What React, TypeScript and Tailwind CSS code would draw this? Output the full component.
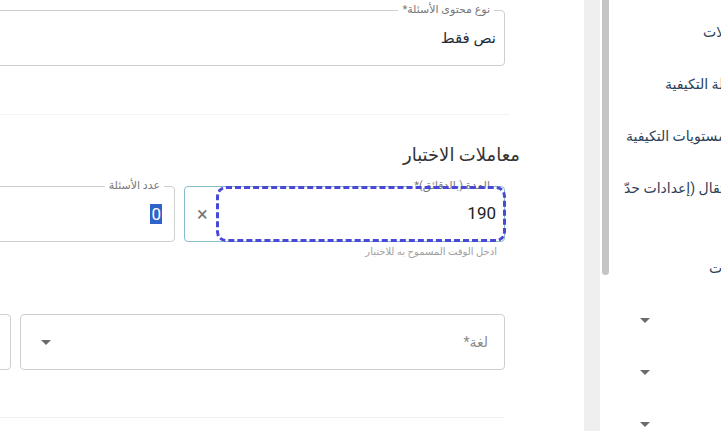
import React from 'react';

const FONT = { fontFamily: "Roboto, 'DejaVu Sans', sans-serif" };

function Caret() {
  return (
    <span className="inline-block h-0 w-0 border-x-[5px] border-t-[5px] border-x-transparent border-t-[#6b6b6b]" />
  );
}

interface OutlinedProps {
  label: string;
  className?: string;
  children?: React.ReactNode;
  borderClass?: string;
}

function Outlined({ label, className = '', children, borderClass = 'border-[#cfcfcf]' }: OutlinedProps) {
  return (
    <div className={`relative h-[56px] rounded-[4px] border ${borderClass} ${className}`}>
      <span className="absolute -top-[8px] right-[10px] bg-white px-[4px] text-[11px] leading-[14px] text-[#777]">
        {label}
      </span>
      {children}
    </div>
  );
}

const navRows = [
  { text: 'المعاملات', pad: 'pl-[93px]' },
  { text: 'الأسئلة التكيفية', pad: 'pl-[55px]' },
  { text: 'المستويات التكيفية', pad: 'pl-[16px]' },
  { text: 'الانتقال (إعدادات حدّ', pad: 'pl-[14px]' },
];

export default function App() {
  return (
    <div className="flex h-[431px] w-[721px] overflow-hidden bg-white" style={FONT}>
      {/* main form */}
      <div dir="rtl" className="w-[584px] shrink-0 overflow-hidden">
        <div className="mr-[79px] w-[700px] pt-[10px]">
          <Outlined label="نوع محتوى الأسئلة*" className="w-[700px]">
            <div className="flex h-full items-center pr-[8px] text-[15px] font-medium text-[#1e2b3c]">
              نص فقط
            </div>
          </Outlined>
        </div>

        <div className="mr-[74px] mt-[48px] h-px w-[510px] bg-[#f3f3f3]" />

        <h2 className="mr-[64px] mt-[28px] text-[18px] leading-[24px] text-[#333]">معاملات الاختبار</h2>

        <div className="mr-[79px] flex gap-[9px] pt-[19px]">
          <div className="w-[321px] shrink-0">
            <Outlined label="المدة (بالدقائق)*" borderClass="border-[#86bccb]">
              <div className="flex h-full items-center justify-between pl-[12px] pr-[8px]">
                <span className="text-[17px] text-[#222]">190</span>
                <span className="text-[20px] leading-none text-[#777]">×</span>
              </div>
              <div className="absolute -top-[1px] -bottom-[1px] left-[31px] -right-[2px] rounded-[10px] border-[3px] border-dashed border-[#4a48d6]" />
            </Outlined>
            <p className="mt-[3px] pr-[8px] text-[10px] leading-[14px] text-[#a0a0a0]">
              ادخل الوقت المسموح به للاختبار
            </p>
          </div>
          <div className="w-[300px] shrink-0">
            <Outlined label="عدد الأسئلة">
              <div className="flex h-full items-center pr-[12px]">
                <span className="bg-[#2f63c9] px-[1px] text-[17px] leading-[20px] text-white">0</span>
              </div>
            </Outlined>
          </div>
        </div>

        <div className="mr-[79px] flex gap-[9px] pt-[55px]">
          <div className="flex h-[56px] w-[485px] shrink-0 items-center justify-between rounded-[4px] border border-[#cfcfcf] pl-[20px] pr-[16px]">
            <span className="text-[14px] text-[#8a8a8a]">لغة*</span>
            <Caret />
          </div>
          <div className="h-[56px] w-[200px] shrink-0 rounded-[4px] border border-[#cfcfcf]" />
        </div>

        <div className="mr-[79px] mt-[47px] h-px w-[505px] bg-[#f2f2f2]" />
      </div>

      {/* gutter + scrollbar */}
      <div className="h-full w-[16px] shrink-0 bg-[#efefef]" />
      <div className="h-full w-[10px] shrink-0 pl-[2px]">
        <div className="h-[275px] w-[7px] rounded-b-full bg-[#c4c4c4]" />
      </div>

      {/* side nav, clipped at the window edge */}
      <div className="min-w-0 flex-1 overflow-hidden pt-[6px] text-[14px] text-[#2c4159]">
        {navRows.map((r) => (
          <div key={r.text} className={`h-[52px] whitespace-nowrap leading-[52px] ${r.pad}`}>
            <span dir="rtl">{r.text}</span>
          </div>
        ))}
        <div className="h-[80px] whitespace-nowrap pl-[99px] pt-[28px] leading-[52px]">
          <span dir="rtl">البيانات</span>
        </div>
        {[0, 1, 2].map((i) => (
          <div key={i} className="flex h-[52px] items-center pl-[30px]">
            <Caret />
          </div>
        ))}
      </div>
    </div>
  );
}
